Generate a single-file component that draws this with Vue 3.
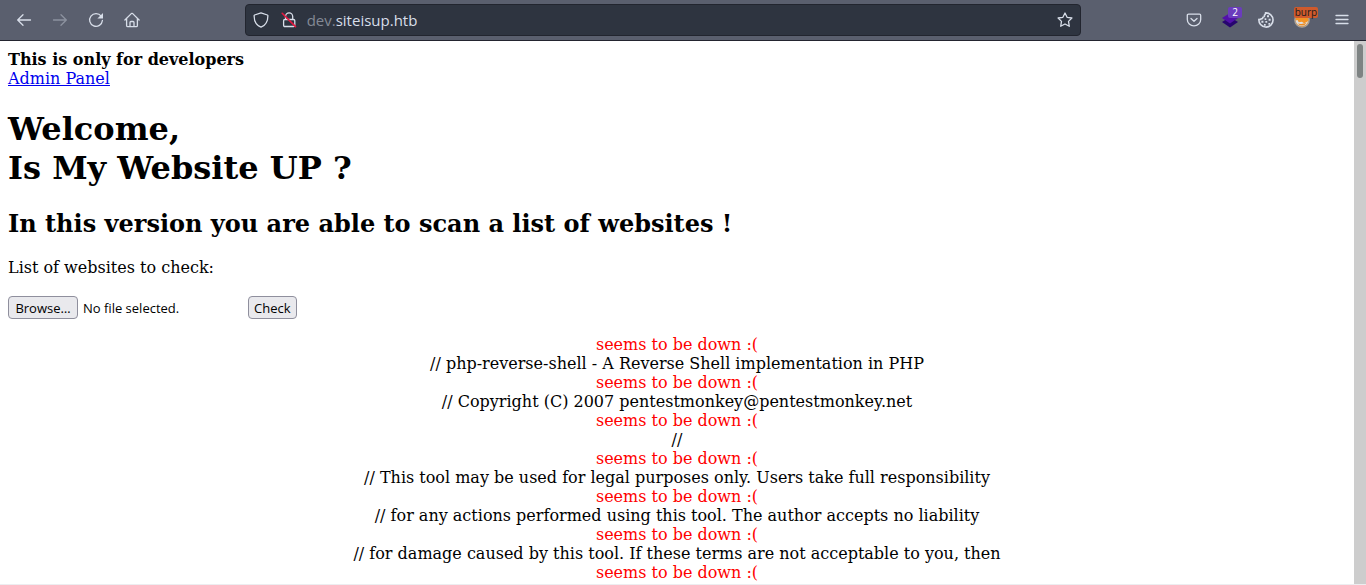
<script setup>
import { ref } from 'vue'

const fileLabel = ref('No file selected.')
const results = [
  '// php-reverse-shell - A Reverse Shell implementation in PHP',
  '// Copyright (C) 2007 pentestmonkey@pentestmonkey.net',
  '//',
  '// This tool may be used for legal purposes only. Users take full responsibility',
  '// for any actions performed using this tool. The author accepts no liability',
  '// for damage caused by this tool. If these terms are not acceptable to you, then'
]

function pickFile(event) {
  const file = event.target.files[0]
  fileLabel.value = file ? file.name : 'No file selected.'
}
</script>

<template>
  <div class="browser">
    <header class="toolbar">
      <nav class="group" aria-label="Navigation">
        <button class="tool" type="button" aria-label="Back">
          <svg viewBox="0 0 16 16"><path d="M14.5 8H2M7 2.7 1.7 8 7 13.3" /></svg>
        </button>
        <button class="tool dim" type="button" aria-label="Forward" disabled>
          <svg viewBox="0 0 16 16"><path d="M1.5 8H14M9 2.7 14.3 8 9 13.3" /></svg>
        </button>
        <button class="tool" type="button" aria-label="Reload">
          <svg viewBox="0 0 16 16">
            <path d="M13.2 4.2A6.4 6.4 0 1 0 14.4 8.5" />
            <path class="solid" d="M15 1v5.4H9.4z" />
          </svg>
        </button>
        <button class="tool" type="button" aria-label="Home">
          <svg viewBox="0 0 16 16">
            <path d="M.9 8 7.3 1.6q.7-.6 1.4 0L15.1 8M2.6 6.6v6.9q0 1.2 1.2 1.2h8.4q1.2 0 1.2-1.2V6.6M6 14.5v-4q0-1 1-1h2q1 0 1 1v4" />
          </svg>
        </button>
      </nav>
      <div class="spacer"></div>
      <div class="address">
        <button class="field-icon" type="button" aria-label="Tracking protection">
          <svg viewBox="0 0 16 16">
            <path d="M8 .9 14.4 3q.5.2.5.8C14.9 9 12.6 13.4 8 15.2 3.4 13.4 1.1 9 1.1 3.8q0-.6.5-.8z" />
          </svg>
        </button>
        <button class="field-icon" type="button" aria-label="Connection not secure">
          <svg viewBox="0 0 16 16">
            <path d="M4.500 7.500V4.500a3.600 3.600 0 0 1 7.200 0v3M3.900 7.500h8.600q1.300 0 1.300 1.300v4.400q0 1.300-1.300 1.300H3.900q-1.300 0-1.300-1.300V8.800q0-1.300 1.300-1.300z" />
            <path class="slash" d="M1.200 1.300 14.500 14.600" />
          </svg>
        </button>
        <div class="url"><span>dev.</span>siteisup.htb</div>
        <button class="field-icon" type="button" aria-label="Bookmark this page">
          <svg viewBox="0 0 16 16">
            <path d="M8 1l2.100 4.300 4.800.7-3.400 3.400.8 4.900L8 12l-4.300 2.300.8-4.900L1.100 6l4.800-.7z" />
          </svg>
        </button>
      </div>
      <div class="spacer"></div>
      <div class="group">
        <button class="tool" type="button" aria-label="Save to Pocket">
          <svg viewBox="0 0 16 16">
            <path d="M2.500 2.200h11q1.200 0 1.200 1.200v4a6.700 6.500 0 0 1-13.400 0v-4q0-1.200 1.200-1.200zM5 6.500 8 9.300l3-2.800" />
          </svg>
        </button>
        <button class="tool" type="button" aria-label="Wappalyzer">
          <svg viewBox="0 0 16 16">
            <path fill="#27056f" stroke="none" d="M0 10 8 5l8 5-8 5.500z" />
            <path fill="#5211aa" stroke="none" d="M0 6 8 1l8 5-8 5.500z" />
          </svg>
          <span class="badge count">2</span>
        </button>
        <button class="tool" type="button" aria-label="Cookie editor">
          <svg viewBox="0 0 16 16">
            <path stroke-width="1.600" d="M7.500.9A7.100 7.100 0 1 1 .9 7.200q1.400.8 2.300-.5 1.700.1 1.700-1.500 1.900-.2 1.500-1.900 1.300-.8 1.100-2.400z" />
            <path class="solid" d="M9 3.200h2v2H9zM6.600 6.300h1.700V8H6.600zM10.600 6.800h2v2h-2zM3.400 8.700h2v2h-2zM7.400 9h1.800v1.800H7.400zM10.400 11h1.800v1.800h-1.800zM6 12h1.700v1.700H6z" />
          </svg>
        </button>
        <button class="tool" type="button" aria-label="FoxyProxy: burp">
          <svg viewBox="0 0 16 16">
            <circle cx="8" cy="8" r="7.200" fill="#f29426" stroke="#a5a19d" />
            <path fill="#dce0e6" stroke="none" d="M1.600 8.500 3.500 8l1.300 2.200L8 9.700l2 1.600L13 10l1.200-1.500q-.9 5.200-6.200 5.500-5.400-.3-6.400-5.500z" />
            <path fill="#ee8a1d" stroke="none" d="M3.700 11.500 7 12l5.500-1q-1.800 2.500-4.500 2.500t-4.300-2z" />
          </svg>
          <span class="badge proxy">burp</span>
        </button>
        <button class="tool menu" type="button" aria-label="Application menu">
          <svg viewBox="0 0 16 16"><path d="M2 3.500h12M2 7.500h12M2 11.500h12" /></svg>
        </button>
      </div>
    </header>

    <div class="viewport">
      <main class="page">
        <b>This is only for developers</b><br />
        <a href="#admin">Admin Panel</a>
        <h1>Welcome,<br />Is My Website UP ?</h1>
        <h2>In this version you are able to scan a list of websites !</h2>
        <form @submit.prevent>
          <p id="list-caption">List of websites to check:</p>
          <div class="upload">
            <label class="picker">
              <input type="file" aria-labelledby="list-caption" @change="pickFile" />
              <span class="browse">Browse…</span>
              <span>{{ fileLabel }}</span>
            </label>
            <button class="check" type="submit">Check</button>
          </div>
        </form>
        <div class="results">
          <div class="down">seems to be down :(</div>
          <template v-for="line in results" :key="line">
            <div>{{ line }}</div>
            <div class="down">seems to be down :(</div>
          </template>
        </div>
      </main>
      <div class="scrollbar" aria-hidden="true"><div class="thumb"></div></div>
    </div>
  </div>
</template>

<style>
body {
  margin: 0;
}
</style>

<style scoped>
.browser {
  display: flex;
  flex-direction: column;
  height: 100vh;
  overflow: hidden;
  background: #fff;
}
.toolbar {
  display: flex;
  flex: none;
  align-items: center;
  height: 40px;
  padding: 0 2px 0 6px;
  background: #5a5f6e;
  border-bottom: 1px solid #23242f;
  font-family: "Open Sans", "Noto Sans", sans-serif;
}
.group {
  display: flex;
}
.spacer {
  flex: 10 1 0;
}
button {
  font-family: inherit;
}
.tool,
.field-icon {
  display: flex;
  position: relative;
  flex: none;
  align-items: center;
  justify-content: center;
  padding: 0;
  border: 0;
  background: none;
}
.tool {
  width: 36px;
  height: 32px;
}
.menu {
  width: 44px;
}
.dim {
  opacity: 0.4;
}
.field-icon {
  width: 28px;
  height: 30px;
}
svg {
  width: 16px;
  height: 16px;
  fill: none;
  stroke: #d8dee9;
  stroke-width: 1.3;
  stroke-linecap: round;
  stroke-linejoin: round;
}
.solid {
  fill: #d8dee9;
  stroke: none;
}
.slash {
  stroke: #e5173f;
  stroke-width: 1.6;
}
.address {
  display: flex;
  flex: 88 1 0;
  align-items: center;
  box-sizing: border-box;
  min-width: 0;
  height: 32px;
  padding: 0 1px;
  background: #2e3440;
  border: 1px solid #22252f;
  border-radius: 4px;
}
.url {
  flex: 1;
  min-width: 0;
  padding-left: 4px;
  color: #d8dee9;
  font-size: 15px;
  line-height: 20px;
}
.url span {
  color: #838995;
}
.badge {
  position: absolute;
  border-radius: 2px;
  font-size: 10px;
  line-height: 11px;
  text-align: center;
}
.count {
  top: 3px;
  right: 6px;
  width: 14px;
  background: #6b3cbd;
  color: #fff;
}
.proxy {
  top: 3px;
  right: 2px;
  width: 24px;
  background: #cf5a2c;
  color: #1b1b1b;
}
.viewport {
  display: flex;
  flex: 1;
  min-height: 0;
  border-bottom: 1px solid #ededf0;
}
.page {
  flex: 1;
  min-width: 0;
  overflow: hidden;
  padding: 9px 8px 0;
  color: #000;
  font-family: "DejaVu Serif", serif;
  font-size: 16px;
  line-height: 19px;
}
a {
  color: #0000ee;
}
h1 {
  margin: 22px 0 21px;
  font-size: 32px;
  line-height: 39px;
}
h2 {
  margin: 20px 0;
  font-size: 24px;
  line-height: 29px;
}
p {
  margin: 20px 0 19px;
}
.upload {
  display: flex;
  align-items: center;
  gap: 4px;
  margin-bottom: 16px;
  font-family: "Open Sans", "Noto Sans", sans-serif;
  font-size: 13px;
}
.picker {
  display: flex;
  position: relative;
  align-items: center;
  gap: 5px;
  width: 236px;
  line-height: 20px;
}
.picker input {
  position: absolute;
  inset: 0;
  width: 100%;
  opacity: 0;
}
.browse,
.check {
  box-sizing: border-box;
  height: 23px;
  padding: 0 5px;
  background: #e9e9ed;
  border: 1px solid #8f8f9d;
  border-radius: 4px;
  color: #000;
  font-size: 13px;
  line-height: 22px;
  text-align: center;
}
.browse {
  min-width: 70px;
}
.results {
  text-align: center;
}
.down {
  color: #f00;
}
.scrollbar {
  flex: none;
  box-sizing: border-box;
  width: 12px;
  padding: 3px;
  background: #cdcdcd;
}
.thumb {
  height: 34px;
  border-radius: 3px;
  background: #7e8383;
}
</style>
